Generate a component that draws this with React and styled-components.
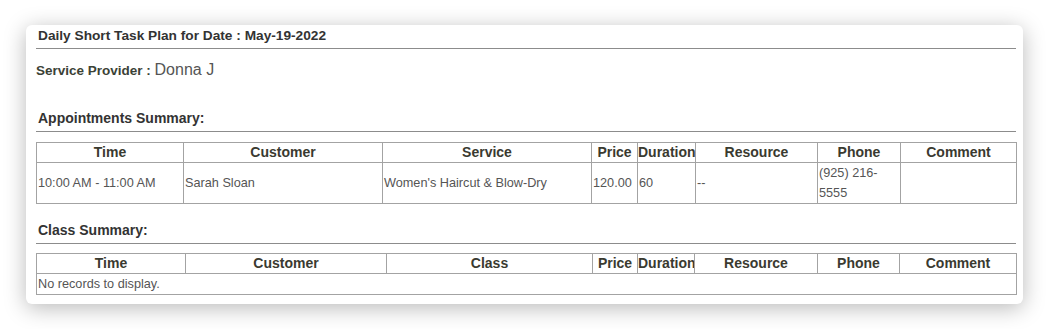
import styled, { createGlobalStyle } from "styled-components"

const GlobalStyle = createGlobalStyle`
  html, body {
    margin: 0;
    padding: 0;
    background: #ffffff;
  }
  body {
    font-family: "Liberation Sans", Arial, sans-serif;
  }
`

const Page = styled.div`
  padding: 25px 26px 27px 26px;
`

const Card = styled.div`
  background: #fff;
  border-radius: 6px;
  box-shadow: 0 4px 22px rgba(0, 0, 0, 0.28);
  padding: 3px 7px 9px 10px;
`

const Heading = styled.div`
  font-weight: bold;
  font-size: ${(p) => p.size || 13.7}px;
  line-height: 16px;
  color: #333;
  padding: 0 0 ${(p) => p.gap || 4}px 2px;
  margin-top: ${(p) => p.top || 0}px;
  border-bottom: 1.5px solid #8c8c8c;
`

const Provider = styled.div`
  margin-top: 12px;
  font-size: 13.5px;
  font-weight: bold;
  color: #3b4236;
  line-height: 18px;
`

const ProviderName = styled.span`
  font-size: 16px;
  font-weight: normal;
  color: #555;
`

const Table = styled.table`
  width: 100%;
  table-layout: fixed;
  border-collapse: collapse;
  margin-top: ${(p) => p.top || 10}px;
`

const Th = styled.th`
  border: 1px solid #a3a3a3;
  font-size: 14px;
  font-weight: bold;
  color: #3a3a30;
  line-height: 19px;
  padding: 0;
  text-align: center;
  white-space: nowrap;
  overflow: hidden;
`

const Td = styled.td`
  border: 1px solid #a3a3a3;
  font-size: 12.7px;
  color: #555;
  line-height: 20px;
  padding: 0 1px;
  vertical-align: middle;
  height: ${(p) => p.h || 19}px;
`

const apptCols = [147, 199, 209, 46, 58, 122, 83, 116]
const classCols = [149, 201, 206, 45, 57, 123, 82, 117]

const Cols = ({ widths }) => (
  <colgroup>
    {widths.map((w, i) => (
      <col key={i} style={{ width: w }} />
    ))}
  </colgroup>
)

const HeaderRow = ({ labels }) => (
  <thead>
    <tr>
      {labels.map((l) => (
        <Th key={l}>{l}</Th>
      ))}
    </tr>
  </thead>
)

const App = () => {
  return (
    <Page>
      <GlobalStyle />
      <Card>
        <Heading>Daily Short Task Plan for Date : May-19-2022</Heading>
        <Provider>
          Service Provider : <ProviderName>Donna J</ProviderName>
        </Provider>
        <Heading size={14} top={30} gap={5}>Appointments Summary:</Heading>
        <Table top={10}>
          <Cols widths={apptCols} />
          <HeaderRow labels={["Time", "Customer", "Service", "Price", "Duration", "Resource", "Phone", "Comment"]} />
          <tbody>
            <tr>
              <Td h={39}>10:00 AM - 11:00 AM</Td>
              <Td h={39}>Sarah Sloan</Td>
              <Td h={39}>Women's Haircut &amp; Blow-Dry</Td>
              <Td h={39}>120.00</Td>
              <Td h={39}>60</Td>
              <Td h={39}>--</Td>
              <Td h={39}>(925) 216-5555</Td>
              <Td h={39}></Td>
            </tr>
          </tbody>
        </Table>
        <Heading size={14} top={18} gap={5}>Class Summary:</Heading>
        <Table top={9}>
          <Cols widths={classCols} />
          <HeaderRow labels={["Time", "Customer", "Class", "Price", "Duration", "Resource", "Phone", "Comment"]} />
          <tbody>
            <tr>
              <Td colSpan={8}>No records to display.</Td>
            </tr>
          </tbody>
        </Table>
      </Card>
    </Page>
  )
}

export default App
